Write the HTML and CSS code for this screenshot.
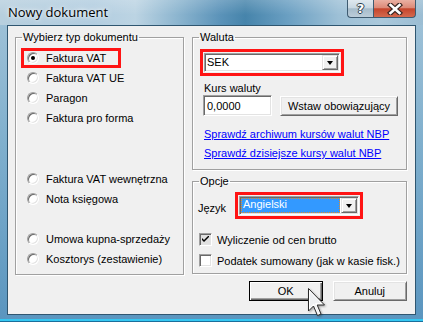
FILE: index.html
```html
<!DOCTYPE html>
<html lang="pl">
<head>
<meta charset="utf-8">
<title>Nowy dokument</title>
<link rel="stylesheet" href="styles.css">
</head>
<body>
<div class="window">
  <div class="titlebar">
    <span class="title">Nowy dokument</span>
    <div class="caption">
      <span class="cbtn help">?</span>
      <span class="cbtn close"><svg width="16" height="12" viewBox="0 0 16 12"><path d="M3.5 2 L12.5 10 M12.5 2 L3.5 10" stroke="#3b2622" stroke-width="5" stroke-linecap="square"/><path d="M3.5 2 L12.5 10 M12.5 2 L3.5 10" stroke="#fff" stroke-width="2.6" stroke-linecap="square"/></svg></span>
    </div>
  </div>
  <div class="client">
    <fieldset class="group docs">
      <legend>Wybierz typ dokumentu</legend>
      <div class="docs-body">
        <div class="radio-set">
          <div class="radio mark"><span class="rb on"></span>Faktura VAT</div>
          <div class="radio"><span class="rb"></span>Faktura VAT UE</div>
          <div class="radio"><span class="rb"></span>Paragon</div>
          <div class="radio"><span class="rb"></span>Faktura pro forma</div>
        </div>
        <div class="radio-set set-2">
          <div class="radio"><span class="rb"></span>Faktura VAT wewnętrzna</div>
          <div class="radio"><span class="rb"></span>Nota księgowa</div>
        </div>
        <div class="radio-set set-3">
          <div class="radio"><span class="rb"></span>Umowa kupna-sprzedaży</div>
          <div class="radio"><span class="rb"></span>Kosztorys (zestawienie)</div>
        </div>
      </div>
    </fieldset>
    <div class="rightcol">
      <fieldset class="group waluta">
        <legend>Waluta</legend>
        <div class="waluta-body">
          <div class="mark-box">
            <div class="combo combo-sek">
              <span class="combo-text">SEK</span>
              <span class="drop"><span class="tri"></span></span>
            </div>
          </div>
          <div class="rate-label">Kurs waluty</div>
          <div class="rate-row">
            <div class="edit">0,0000</div>
            <div class="btn btn-rate">Wstaw obowiązujący</div>
          </div>
          <a class="link link-1" href="#">Sprawdź archiwum kursów walut NBP</a>
          <a class="link link-2" href="#">Sprawdź dzisiejsze kursy walut NBP</a>
        </div>
      </fieldset>
      <fieldset class="group opcje">
        <legend>Opcje</legend>
        <div class="opcje-body">
          <div class="lang-row">
            <span class="lang-label">Język</span>
            <div class="mark-box">
              <div class="combo combo-lang">
                <span class="combo-sel">Angielski</span>
                <span class="drop"><span class="tri"></span></span>
              </div>
            </div>
          </div>
          <div class="check-row first"><span class="cb on"><svg width="7" height="7" viewBox="0 0 7 7"><path d="M0 2 L0 4 L2 6 L7 1 L7 -1 L2 4 Z" fill="#000"/></svg></span>Wyliczenie od cen brutto</div>
          <div class="check-row"><span class="cb"></span>Podatek sumowany (jak w kasie fisk.)</div>
        </div>
      </fieldset>
      <div class="buttons">
        <div class="btn btn-ok">OK</div>
        <div class="btn btn-cancel">Anuluj</div>
      </div>
    </div>
    <svg class="cursor" width="20" height="30" viewBox="0 0 20 30"><polygon points="0.5,0.5 0.5,23 5.5,18 9.5,27.5 13,26 9.2,17 16.5,17" fill="#fff" stroke="#2a2a2a" stroke-width="1" stroke-linejoin="miter"/><polygon points="2,4 2,19.5 5.8,15.6 10.3,25.5 11.2,25.1 7,15.2 12.8,15.2" fill="#eef0f2"/></svg>
  </div>
</div>
</body>
</html>
```

FILE: styles.css
```css
html, body {
  margin: 0;
  padding: 0;
}
body {
  width: 423px;
  height: 322px;
  overflow: hidden;
  font-family: "Liberation Sans", Arial, sans-serif;
  font-size: 11px;
  color: #000;
}
.window {
  width: 423px;
  height: 322px;
  box-sizing: border-box;
  padding: 0 7px 7px;
  display: flex;
  flex-direction: column;
  background:
    linear-gradient(180deg, transparent 0, transparent 319px, #35c8f2 319px, #35c8f2 321px, #1b6f9c 321px),
    linear-gradient(180deg, #a3c4d9 0, #7fafcd 45%, #5a95bf 100%);
}
.titlebar {
  height: 25px;
  flex: none;
  margin: 0 -7px;
  padding: 0 7px 0 8px;
  display: flex;
  justify-content: space-between;
  align-items: flex-start;
  background:
    linear-gradient(180deg, rgba(255,255,255,0.18) 0, rgba(255,255,255,0) 60%),
    linear-gradient(90deg, #b7cfde 0%, #b2cde0 22%, #bcd4e3 32%, #8cb5cf 42%, #5b93b9 52%, #4684ab 58%, #6a9fc2 68%, #9dc0d6 80%, #aac8db 90%, #9bbdd3 100%);
}
.title {
  font-family: "Open Sans", "Noto Sans", sans-serif;
  font-size: 13px;
  line-height: 16px;
  margin-top: 4px;
  color: #000;
  text-shadow: 0 0 6px rgba(255,255,255,0.9), 0 0 3px rgba(255,255,255,0.8);
}
.caption {
  display: flex;
  height: 18px;
}
.cbtn {
  height: 18px;
  box-sizing: border-box;
  display: flex;
  align-items: center;
  justify-content: center;
  border: 1px solid #3e5b70;
  border-top: none;
}
.help {
  width: 26px;
  border-radius: 0 0 0 4px;
  border-right: none;
  background: linear-gradient(180deg, #dfe8ee 0%, #c9d8e2 45%, #a6bccb 52%, #bccdd9 100%);
  font-family: "DejaVu Sans", sans-serif;
  font-weight: bold;
  font-size: 13px;
  color: #fff;
  text-shadow: 1px 0 0 #2c3e4c, -1px 0 0 #2c3e4c, 0 1px 0 #2c3e4c, 0 -1px 0 #2c3e4c;
  line-height: 16px;
}
.close {
  width: 43px;
  border-radius: 0 0 4px 0;
  background: linear-gradient(180deg, #eab0a2 0%, #dc8a78 45%, #c5452c 52%, #d46a4e 100%);
}
.client {
  position: relative;
  flex: 1;
  box-sizing: border-box;
  border: 1px solid #2f5670;
  background: #f0f0f0;
  display: flex;
  align-items: flex-start;
  padding: 5px 0 0 7px;
}
.group {
  margin: 0;
  padding: 0;
  min-width: 0;
  box-sizing: border-box;
  border: 1px solid #a0a0a0;
  box-shadow: 1px 1px 0 #fff, inset 1px 1px 0 #fff;
}
.group legend {
  margin-left: 6px;
  padding: 0 1px;
  line-height: 13px;
  font-size: 11px;
}
.docs {
  width: 169px;
  height: 244px;
}
.docs-body {
  padding: 4px 0 0 5px;
}
.radio-set {
  display: flex;
  flex-direction: column;
}
.set-2 {
  margin-top: 41px;
}
.set-3 {
  margin-top: 20px;
}
.radio {
  height: 20px;
  display: flex;
  align-items: center;
  padding-left: 6px;
  box-sizing: border-box;
  white-space: nowrap;
}
.radio.mark {
  width: 100px;
  outline: 3px solid #ff1414;
  outline-offset: -3px;
}
.rb {
  position: relative;
  width: 12px;
  height: 12px;
  box-sizing: border-box;
  border-radius: 50%;
  border: 1px solid;
  border-color: #a0a0a0 #fff #fff #a0a0a0;
  background: #fff;
  box-shadow: inset 1px 1px 0 #696969, inset -1px -1px 0 #e3e3e3;
  margin-right: 7px;
  flex: none;
}
.rb.on::after {
  content: "";
  position: absolute;
  left: 3px;
  top: 3px;
  width: 4px;
  height: 4px;
  border-radius: 50%;
  background: #000;
}
.rightcol {
  width: 215px;
  margin-left: 8px;
  display: flex;
  flex-direction: column;
}
.waluta {
  height: 139px;
}
.waluta-body {
  padding: 5px 0 0 7px;
  display: flex;
  flex-direction: column;
  align-items: flex-start;
}
.mark-box {
  border: 3px solid #ff1414;
  padding: 1px;
  display: flex;
}
.combo {
  height: 19px;
  box-sizing: border-box;
  border: 1px solid;
  border-color: #a0a0a0 #fff #fff #a0a0a0;
  box-shadow: inset 1px 1px 0 #696969, inset -1px -1px 0 #e3e3e3;
  background: #fff;
  display: flex;
  align-items: stretch;
  padding: 1px;
}
.combo-sek {
  width: 136px;
}
.combo-lang {
  width: 120px;
}
.combo-text {
  flex: 1;
  line-height: 15px;
  padding-left: 1px;
}
.combo-sel {
  flex: 1;
  margin: 0 1px 0 0;
  background: #3399ff;
  color: #fff;
  line-height: 13px;
  padding-left: 2px;
  outline: 1px dotted #e08a2a;
  outline-offset: -1px;
}
.drop {
  width: 16px;
  box-sizing: border-box;
  background: #f0f0f0;
  border: 1px solid;
  border-color: #e3e3e3 #696969 #696969 #e3e3e3;
  box-shadow: inset 1px 1px 0 #fff, inset -1px -1px 0 #a0a0a0;
  display: flex;
  align-items: center;
  justify-content: center;
}
.tri {
  width: 0;
  height: 0;
  border-left: 3.5px solid transparent;
  border-right: 3.5px solid transparent;
  border-top: 4px solid #000;
  margin-top: 1px;
}
.rate-label {
  margin: 5px 0 0 4px;
  line-height: 14px;
}
.rate-row {
  display: flex;
  gap: 8px;
  margin-left: 3px;
}
.edit {
  width: 69px;
  height: 21px;
  box-sizing: border-box;
  border: 1px solid;
  border-color: #a0a0a0 #fff #fff #a0a0a0;
  box-shadow: inset 1px 1px 0 #696969, inset -1px -1px 0 #e3e3e3;
  background: #fff;
  padding: 3px 0 0 3px;
  line-height: 14px;
}
.btn {
  box-sizing: border-box;
  height: 21px;
  background: #f0f0f0;
  border: 1px solid;
  border-color: #fff #696969 #696969 #fff;
  box-shadow: inset 1px 1px 0 #e3e3e3, inset -1px -1px 0 #a0a0a0;
  display: flex;
  align-items: center;
  justify-content: center;
  white-space: nowrap;
}
.btn-rate {
  width: 118px;
  margin-top: 1px;
  height: 20px;
}
.link {
  color: #0000ff;
  text-decoration: underline;
  line-height: 14px;
  margin-left: 4px;
  white-space: nowrap;
}
.link-1 {
  margin-top: 11px;
}
.link-2 {
  margin-top: 5px;
}
.opcje {
  height: 99px;
  margin-top: 5px;
}
.opcje-body {
  padding: 4px 0 0 5px;
}
.lang-row {
  display: flex;
  align-items: center;
}
.lang-label {
  width: 37px;
  margin-top: 4px;
}
.check-row {
  height: 21px;
  display: flex;
  align-items: center;
  white-space: nowrap;
}
.check-row.first {
  margin-top: 10px;
}
.cb {
  width: 13px;
  height: 13px;
  box-sizing: border-box;
  border: 1px solid;
  border-color: #a0a0a0 #fff #fff #a0a0a0;
  box-shadow: inset 1px 1px 0 #696969, inset -1px -1px 0 #e3e3e3;
  background: #fff;
  margin: 0 5px 0 1px;
  display: flex;
  align-items: center;
  justify-content: center;
  flex: none;
}
.cb.on {
  background: #e0e0e0;
}
.buttons {
  display: flex;
  gap: 10px;
  margin-top: 7px;
  padding-left: 57px;
}
.btn-ok {
  width: 74px;
  height: 20px;
  border: 1px solid #000;
  box-shadow: inset 1px 1px 0 #fff, inset -1px -1px 0 #696969, inset -2px -2px 0 #a0a0a0;
}
.btn-cancel {
  width: 75px;
  height: 20px;
}
.cursor {
  position: absolute;
  left: 300px;
  top: 262px;
  filter: drop-shadow(1px 1px 1px rgba(0,0,0,0.35));
}
```
